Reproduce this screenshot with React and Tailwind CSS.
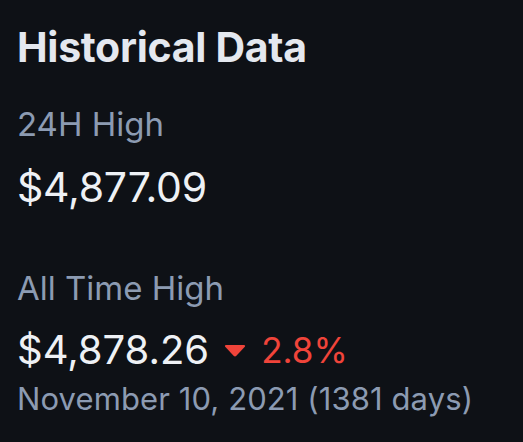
export default function App() {
  return (
    <div className="w-[523px] h-[442px] bg-[#0e1116] overflow-hidden" style={{ fontFamily: 'Inter, "Liberation Sans", sans-serif' }}>
      <div className="flex flex-col pl-[17px] pt-[22px]">
        <div className="text-[41px] leading-[51px] font-bold text-[#e4e8ef] tracking-[-0.3px]">Historical Data</div>
        <div className="mt-[31px] text-[33px] leading-[40px] text-[#8c9bb2]">24H High</div>
        <div className="mt-[18px] text-[41px] leading-[50px] text-[#eef1f5] tracking-[-0.2px]">$4,877.09</div>
        <div className="mt-[56px] text-[33px] leading-[40px] text-[#8c9bb2]">All Time High</div>
        <div className="mt-[18px] flex items-center text-[40px] leading-[48px]">
          <span className="text-[#eef1f5]">$4,878.26</span>
          <svg className="ml-[15px] mr-[15px] mt-[2px]" width="22" height="12" viewBox="0 0 22 12">
            <path d="M1.2 1.8 Q0.2 0 2.4 0 H19.6 Q21.8 0 20.8 1.8 L12.4 10.8 Q11 12.2 9.6 10.8 Z" fill="#f0443a" />
          </svg>
          <span className="text-[35px] text-[#f0443a]">2.8%</span>
        </div>
        <div className="mt-[6px] text-[31px] leading-[37px] text-[#8c9bb2] tracking-[0.1px]">November 10, 2021 (1381 days)</div>
      </div>
    </div>
  );
}
